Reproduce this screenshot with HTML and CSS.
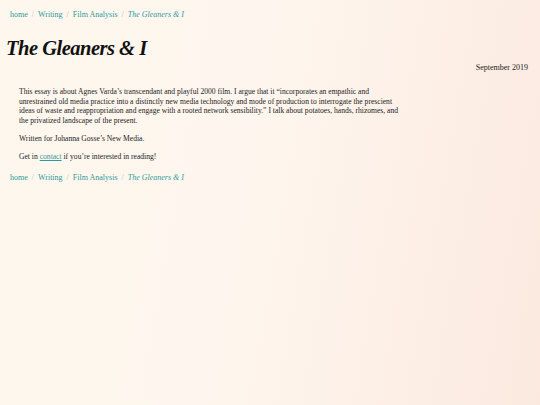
FILE: index.html
```html
<!DOCTYPE html>
<html>
<head>
<meta charset="utf-8">
<link rel="stylesheet" href="styles.css">
</head>
<body>
<div class="page">
  <nav class="crumbs">
    <a href="#" class="crumb">home</a><span class="sep">/</span><a href="#" class="crumb">Writing</a><span class="sep">/</span><a href="#" class="crumb">Film Analysis</a><span class="sep">/</span><a href="#" class="crumb cur">The Gleaners &amp; I</a>
  </nav>
  <h1 class="title">The Gleaners &amp; I</h1>
  <div class="date">September 2019</div>
  <div class="body">
    <p>This essay is about Agnes Varda’s transcendant and playful 2000 film. I argue that it “incorporates an empathic and unrestrained old media practice into a distinctly new media technology and mode of production to interrogate the prescient ideas of waste and reappropriation and engage with a rooted network sensibility.” I talk about potatoes, hands, rhizomes, and the privatized landscape of the present.</p>
    <p>Written for Johanna Gosse’s New Media.</p>
    <p class="last">Get in <a href="#" class="link">contact</a> if you’re interested in reading!</p>
  </div>
  <nav class="crumbs bottom">
    <a href="#" class="crumb">home</a><span class="sep">/</span><a href="#" class="crumb">Writing</a><span class="sep">/</span><a href="#" class="crumb">Film Analysis</a><span class="sep">/</span><a href="#" class="crumb cur">The Gleaners &amp; I</a>
  </nav>
</div>
</body>
</html>
```

FILE: styles.css
```css
html, body {
  margin: 0;
  padding: 0;
  height: 100%;
}
body {
  background: linear-gradient(100deg, #fef7ee 0%, #fef6ee 45%, #fbe9df 100%);
  font-family: "Liberation Serif", "DejaVu Serif", serif;
  color: #222;
}
.page {
  padding: 10px 12px 0 10px;
}
.crumbs {
  display: flex;
  font-size: 8px;
  line-height: 10px;
}
.crumb {
  color: #2f9a9a;
  text-decoration: none;
}
.crumb.cur {
  font-style: italic;
}
.crumbs .sep {
  color: #bbb;
  margin: 0 4px;
}
.crumbs.bottom {
  margin-top: 12px;
}
.title {
  margin: 14px 0 0 -4px;
  font-size: 20.5px;
  line-height: 28px;
  font-style: italic;
  font-weight: bold;
  letter-spacing: -0.5px;
  color: #111;
}
.date {
  text-align: right;
  font-size: 8px;
  line-height: 10px;
  margin-top: 1px;
}
.body {
  width: 380px;
  padding: 14px 0 0 9px;
  font-size: 7.6px;
  line-height: 9.7px;
}
.body p {
  margin: 0 0 8px 0;
}
.body p.last {
  margin-bottom: 0;
}
.link {
  color: #2f9a9a;
}
```
